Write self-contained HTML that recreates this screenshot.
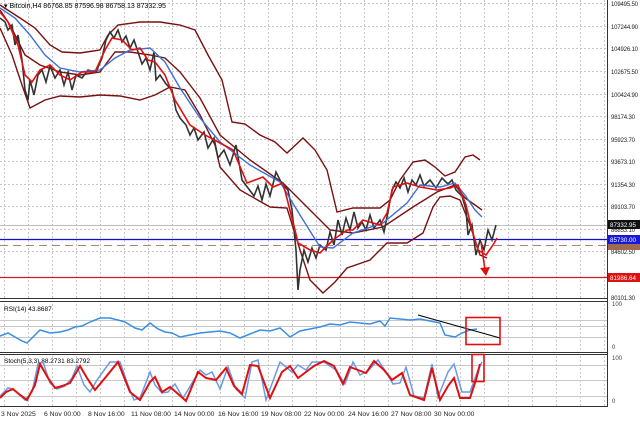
<!DOCTYPE html>
<html><head><meta charset="utf-8"><style>
html,body{margin:0;padding:0;background:#fff;width:640px;height:422px;overflow:hidden}
svg{display:block;font-family:"Liberation Sans",sans-serif}
</style></head><body>
<svg width="640" height="422" viewBox="0 0 640 422" xmlns="http://www.w3.org/2000/svg">
<defs>
<pattern id="vg" x="4" y="0" width="24" height="422" patternUnits="userSpaceOnUse">
<line x1="0.5" y1="0" x2="0.5" y2="422" stroke="#c8c8c8" stroke-width="1" stroke-dasharray="2,2"/>
</pattern>
</defs>
<rect width="640" height="422" fill="#fff"/>
<rect x="0" y="0" width="607" height="298" fill="url(#vg)"/>
<rect x="0" y="302" width="607" height="50" fill="url(#vg)"/>
<rect x="0" y="354" width="607" height="52" fill="url(#vg)"/>
<g stroke="#c8c8c8" stroke-dasharray="2,2">
<line x1="0" y1="3.5" x2="607" y2="3.5"/><line x1="0" y1="26.5" x2="607" y2="26.5"/>
<line x1="0" y1="48.5" x2="607" y2="48.5"/><line x1="0" y1="71.5" x2="607" y2="71.5"/>
<line x1="0" y1="94.5" x2="607" y2="94.5"/><line x1="0" y1="116.5" x2="607" y2="116.5"/>
<line x1="0" y1="139.5" x2="607" y2="139.5"/><line x1="0" y1="161.5" x2="607" y2="161.5"/>
<line x1="0" y1="184.5" x2="607" y2="184.5"/><line x1="0" y1="206.5" x2="607" y2="206.5"/>
<line x1="0" y1="229.5" x2="607" y2="229.5"/><line x1="0" y1="251.5" x2="607" y2="251.5"/>
</g>
<line x1="0" y1="225.5" x2="607" y2="225.5" stroke="#c0c0c0"/>
<line x1="0" y1="239.5" x2="607" y2="239.5" stroke="#1010d0" stroke-width="1.3"/>
<line x1="0" y1="245.5" x2="607" y2="245.5" stroke="#b08070" stroke-dasharray="8,5"/>
<line x1="0" y1="277.5" x2="607" y2="277.5" stroke="#cc2020" stroke-width="1.3"/>
<g fill="none" stroke="#7a1010" stroke-width="1.4">
<polyline points="0,5 20,18 35,28 50,45 62,52 80,53 100,50 108,35 118,25 140,22 160,22 180,25 195,30 208,55 222,80 232,122 245,124 260,135 275,142 287,153 303,138 315,150 327,170 337,212 353,208 380,208 390,200 400,180 413,162 425,160 435,167 445,176 455,172 465,157 473,155 480,160"/>
<polyline points="0,28 12,55 22,85 30,108 45,100 60,96 80,97 100,95 120,96 140,100 155,95 170,87 185,90 200,115 215,145 220,167 240,190 270,207 287,208 300,250 310,280 323,293 335,282 347,268 370,260 387,243 407,243 423,233 433,207 440,197 450,196 460,200 470,225 480,255 487,258"/>
<polyline points="0,10 10,25 25,55 40,65 60,72 80,75 100,72 115,52 130,52 150,55 165,58 180,72 200,98 220,135 250,160 283,183 310,210 330,230 353,233 383,227 413,207 437,192 455,185 465,198 475,205 482,210"/>
</g>
<g fill="none" stroke="#333" stroke-width="1.6">
<polyline points="0,18 5,22 8,30 12,25 15,45 18,35 22,60 25,90 28,100 30,80 34,95 38,75 42,70 46,82 50,66 55,78 60,70 64,85 68,72 72,90 76,75 82,78 88,70 96,72 102,58 106,40 110,32 114,38 118,30 122,42 126,36 130,48 134,40 138,52 142,64 146,58 150,70 154,52 156,80 160,75 166,84 172,90 176,110 180,118 186,125 190,135 194,128 198,140 204,132 208,148 214,138 218,158 224,150 230,165 236,145 242,180 248,188 254,196 258,186 262,200 266,184 270,196 276,172 282,184 288,190 292,210 296,250 298,290 300,270 304,250 308,262 312,248 316,258 320,245 326,250 330,232 334,245 338,220 342,235 346,218 350,230 354,212 358,228 362,222 366,230 370,215 374,228 380,220 384,232 388,212 392,190 396,182 400,188 404,178 408,192 412,180 416,185 420,175 424,186 430,180 436,188 442,178 448,184 452,180 456,190 462,196 466,210 468,235 472,225 476,255 480,240 484,250 488,230 492,240 496,225"/>
</g>
<polyline fill="none" stroke="#3c6fd8" stroke-width="1.4" points="0,8 15,18 30,35 45,55 60,68 80,72 100,70 115,58 130,50 150,48 165,62 180,88 200,118 220,142 250,165 280,182 300,215 320,247 333,248 353,233 383,223 407,203 420,185 440,187 455,183 465,195 475,210 482,217"/>
<polyline fill="none" stroke="#e01010" stroke-width="1.6" points="0,12 8,22 18,45 25,75 32,82 40,70 50,65 60,75 70,80 82,72 95,72 105,50 112,38 122,40 132,50 140,48 148,60 155,62 165,75 175,100 190,125 205,135 220,143 233,150 247,183 263,177 273,187 283,183 295,230 298,243 310,250 320,253 333,240 347,230 353,230 363,220 380,225 387,213 393,187 407,183 420,187 437,190 450,188 458,185 466,205 472,230 478,250 486,255 493,245 497,238"/>
<line x1="481" y1="242" x2="485" y2="270" stroke="#e01010" stroke-width="1.6"/>
<polygon points="480,268 490,267 486,276" fill="#e01010"/>
<text x="4" y="8" font-size="7" fill="#000">▾ Bitcoin,H4  86768.85 87596.98 86758.13 87332.95</text>
<g stroke="#333" fill="none">
<line x1="607.5" y1="0" x2="607.5" y2="407"/>
<line x1="0" y1="298.5" x2="607" y2="298.5"/>
<line x1="0" y1="301.5" x2="607" y2="301.5"/>
<line x1="0" y1="352.5" x2="607" y2="352.5"/>
<line x1="0" y1="354.5" x2="607" y2="354.5"/>
<line x1="0" y1="406.5" x2="607" y2="406.5"/>
</g>
<g font-size="6" fill="#222" lengthAdjust="spacingAndGlyphs">
<text x="611" y="6" textLength="27">109495.50</text><text x="611" y="29" textLength="27">107244.90</text>
<text x="611" y="51" textLength="27">104926.10</text><text x="611" y="74" textLength="27">102675.50</text>
<text x="611" y="97" textLength="27">100424.90</text><text x="611" y="119" textLength="24">98174.30</text>
<text x="611" y="142" textLength="24">95923.70</text><text x="611" y="164" textLength="24">93673.10</text>
<text x="611" y="187" textLength="24">91354.30</text><text x="611" y="209" textLength="24">89103.70</text>
<text x="611" y="232" textLength="24">86853.10</text><text x="611" y="254" textLength="24">84602.50</text>
<text x="611" y="300" textLength="24">80101.30</text>
</g>
<rect x="608" y="220" width="32" height="9" fill="#111"/><text x="610" y="227" font-size="6" fill="#fff" textLength="26" lengthAdjust="spacingAndGlyphs">87332.95</text>
<rect x="608" y="235" width="32" height="9" fill="#1818d8"/><text x="610" y="242" font-size="6" fill="#fff" textLength="26" lengthAdjust="spacingAndGlyphs">85730.00</text>
<rect x="608" y="244" width="32" height="6" fill="#a06a50"/>
<rect x="608" y="273" width="32" height="9" fill="#e01010"/><text x="610" y="280" font-size="6" fill="#fff" textLength="26" lengthAdjust="spacingAndGlyphs">81986.64</text>
<g stroke="#c8c8c8"><line x1="0" y1="320.5" x2="607" y2="320.5"/><line x1="0" y1="326.5" x2="607" y2="326.5"/><line x1="0" y1="337.5" x2="607" y2="337.5"/></g>
<text x="4" y="311" font-size="6.5" fill="#000">RSI(14) 43.8687</text>
<polyline fill="none" stroke="#3a8ee6" stroke-width="1.5" points="0,336 8,333 15,337 22,341 27,343 32,338 40,330 50,333 60,332 68,330 75,327 82,326 90,322 100,318 110,318 118,320 125,322 135,328 142,330 150,323 158,329 165,332 172,333 180,337 190,335 200,333 210,332 220,331 230,333 240,338 250,334 260,330 270,331 280,328 290,337 300,331 310,329 320,327 330,324 340,325 350,322 360,323 370,324 380,321 385,326 390,318 400,319 410,320 420,319 430,321 440,323 445,335 455,337 462,333 470,330 477,329"/>
<line x1="418" y1="315" x2="500" y2="338" stroke="#000" stroke-width="1.1"/>
<rect x="466" y="317.5" width="34" height="27" fill="none" stroke="#e01010" stroke-width="1.6"/>
<g font-size="6" fill="#444"><text x="612" y="306">100</text><text x="612" y="349">0</text></g>
<g stroke="#c8c8c8"><line x1="0" y1="365.5" x2="607" y2="365.5"/><line x1="0" y1="380.5" x2="607" y2="380.5"/><line x1="0" y1="396.5" x2="607" y2="396.5"/></g>
<text x="4" y="363" font-size="6.5" fill="#000">Stoch(5,3,3) 88.2731 83.2792</text>
<polyline fill="none" stroke="#6a9ae6" stroke-width="1.5" points="0,396 8,388 13,389 20,395 25,400 32,392 38,364 43,362 50,383 57,389 65,386 72,378 77,366 84,385 90,392 97,380 110,362 120,362 128,385 134,400 140,398 150,372 155,385 162,393 168,392 175,384 183,398 200,370 206,375 212,372 220,389 228,367 236,389 245,398 252,362 258,360 266,400 280,362 292,372 298,365 306,370 312,362 324,362 336,370 345,384 353,362 360,375 368,371 378,360 386,372 393,384 400,383 406,367 414,396 424,398 432,364 438,397 448,372 454,364 462,392 470,392 478,370 482,362"/>
<polyline fill="none" stroke="#e01010" stroke-width="2" points="0,398 6,392 13,389 20,395 27,400 35,385 40,364 48,378 55,388 62,386 70,383 80,366 87,378 95,390 105,378 118,362 130,392 140,400 150,382 155,377 162,392 170,387 177,393 186,401 198,372 206,378 216,380 226,368 234,386 242,394 250,365 258,366 270,398 282,372 290,366 298,378 306,372 314,366 324,361 334,366 343,384 350,367 358,370 366,373 374,361 384,370 392,380 402,373 410,395 424,400 432,368 440,400 448,386 454,378 460,398 470,398 476,380 480,364"/>
<rect x="472" y="354.5" width="12" height="27" fill="none" stroke="#e01010" stroke-width="1.6"/>
<g font-size="6" fill="#444"><text x="612" y="360">100</text><text x="612" y="403">0</text></g>
<g font-size="6.8" fill="#222">
<text x="1" y="416">3 Nov 2025</text><text x="44" y="416">6 Nov 00:00</text>
<text x="88" y="416">8 Nov 16:00</text><text x="131" y="416">11 Nov 08:00</text>
<text x="174" y="416">14 Nov 00:00</text><text x="218" y="416">16 Nov 16:00</text>
<text x="261" y="416">19 Nov 08:00</text><text x="304" y="416">22 Nov 00:00</text>
<text x="348" y="416">24 Nov 16:00</text><text x="391" y="416">27 Nov 08:00</text>
<text x="434" y="416">30 Nov 00:00</text>
</g>
</svg>
</body></html>
